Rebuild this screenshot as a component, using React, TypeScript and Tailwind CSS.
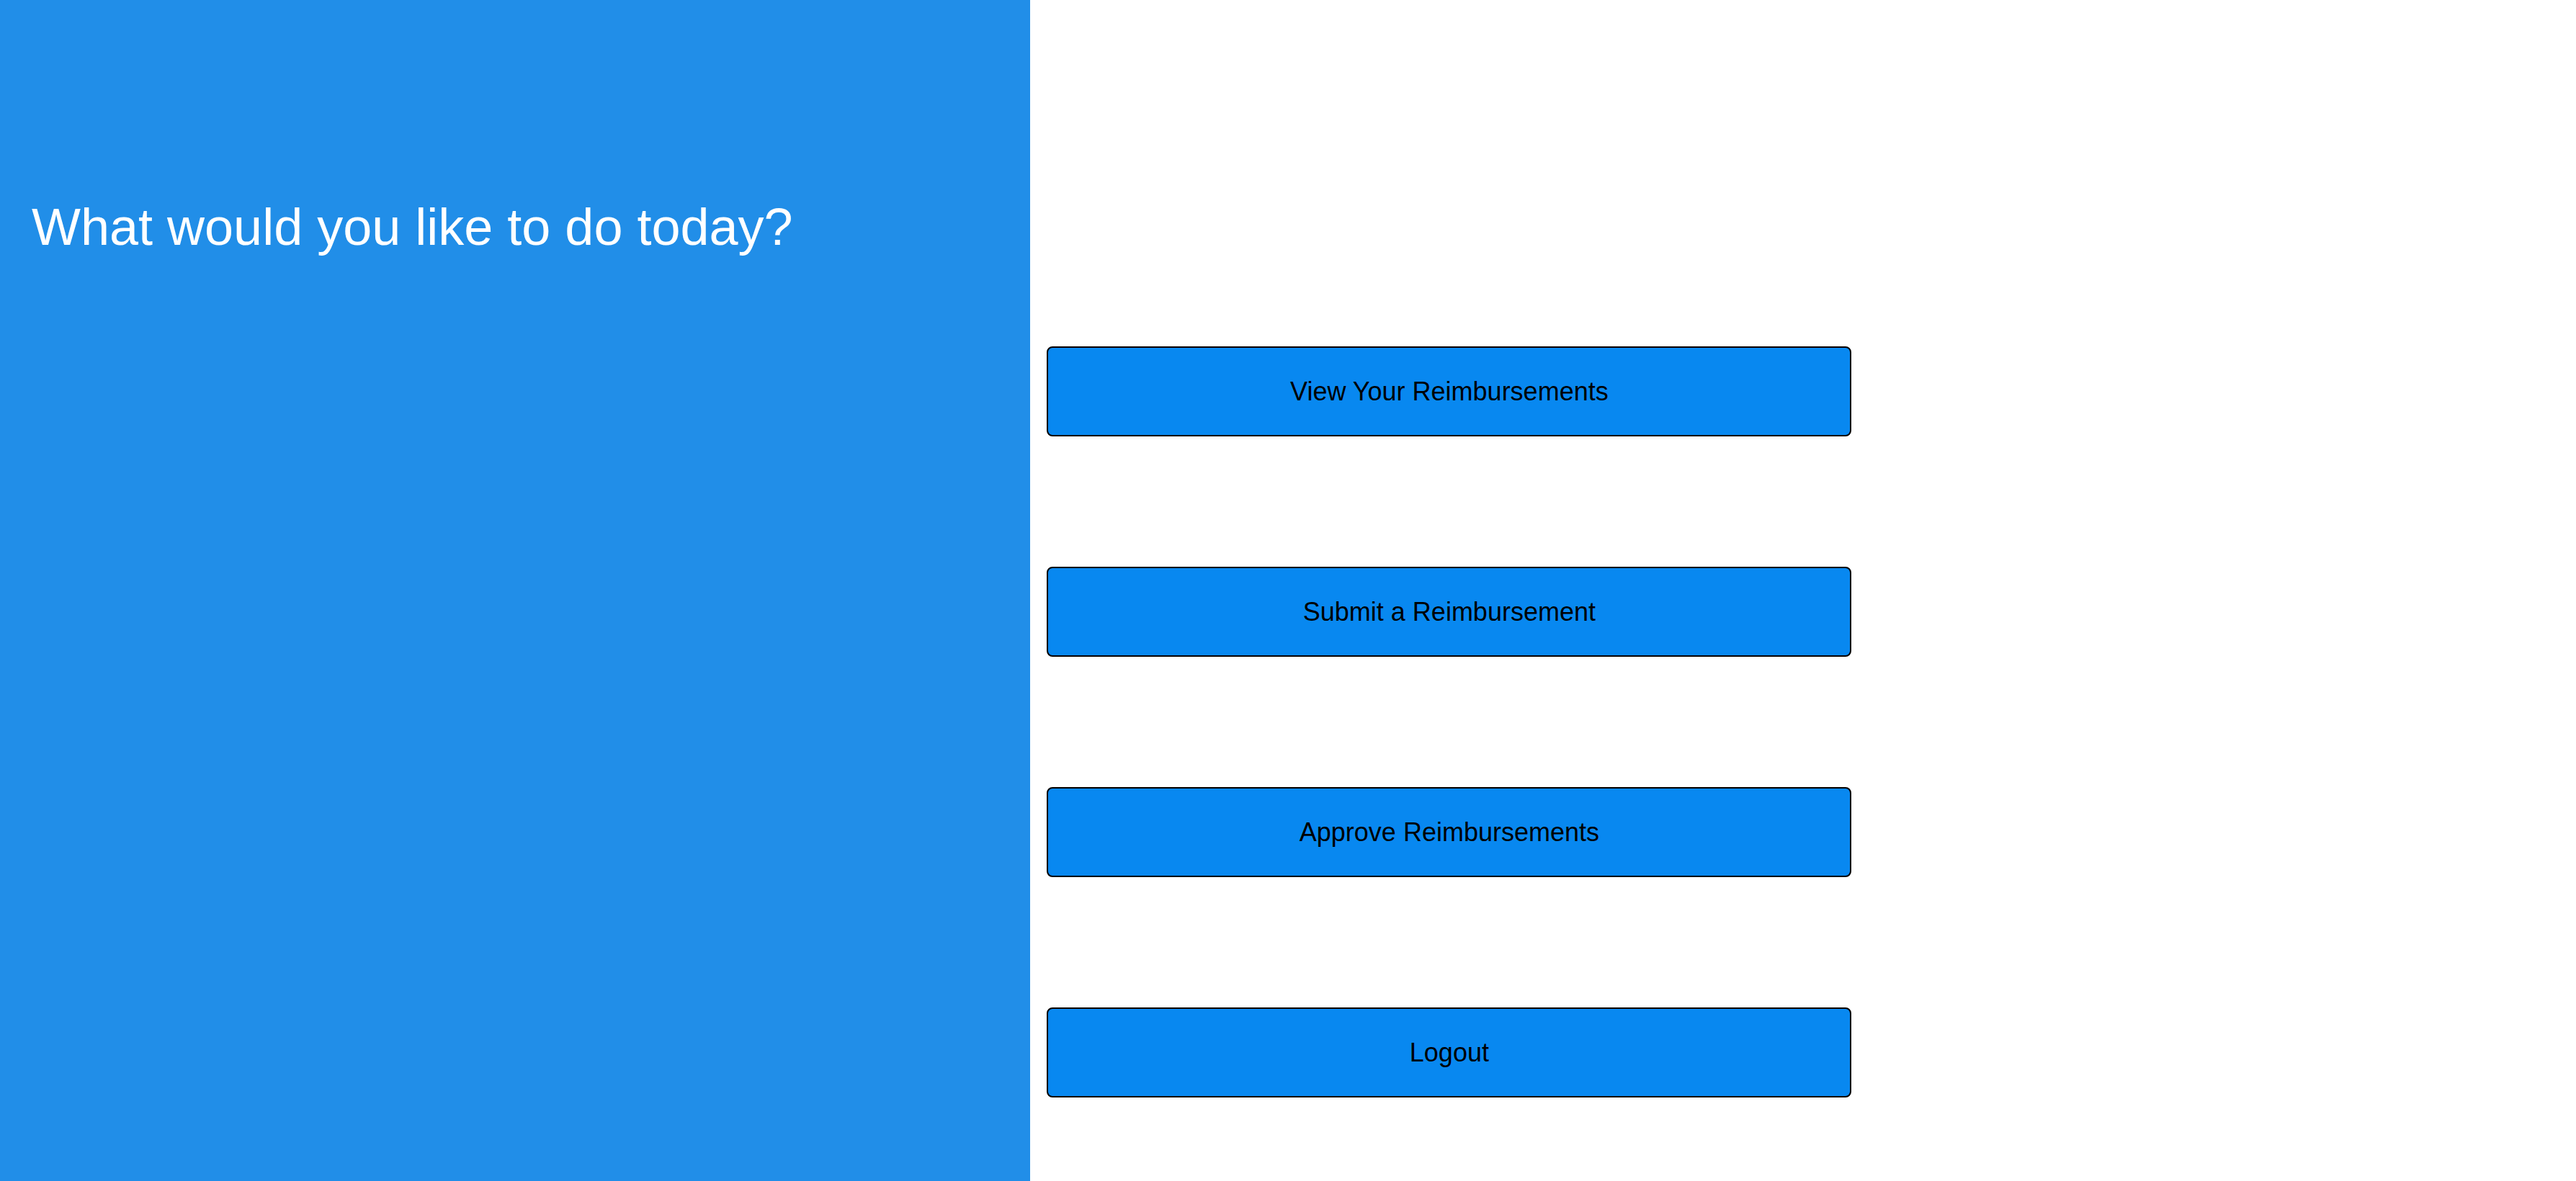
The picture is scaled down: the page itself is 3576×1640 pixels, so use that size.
import React from 'react';

const actions = ['View Your Reimbursements', 'Submit a Reimbursement', 'Approve Reimbursements', 'Logout'];

const MenuButton: React.FC<{ label: string }> = ({ label }) => (
  <button
    type="button"
    className="w-[1117px] h-[125px] bg-[#0888f0] border-2 border-black rounded-[8px] text-[36px] text-black cursor-pointer"
  >
    {label}
  </button>
);

export default function App() {
  return (
    <div className="flex w-full h-[1640px] font-['Liberation_Sans',Arial,sans-serif]">
      <div className="w-[40%] h-full bg-[#218ee8] pt-[261px] pl-[44px]">
        <h1 className="text-[72px] leading-normal font-normal text-white">What would you like to do today?</h1>
      </div>
      <div className="flex-1 h-full bg-white flex flex-col pt-[481px] pl-[23px] gap-[181px]">
        {actions.map((a) => (
          <MenuButton key={a} label={a} />
        ))}
      </div>
    </div>
  );
}
